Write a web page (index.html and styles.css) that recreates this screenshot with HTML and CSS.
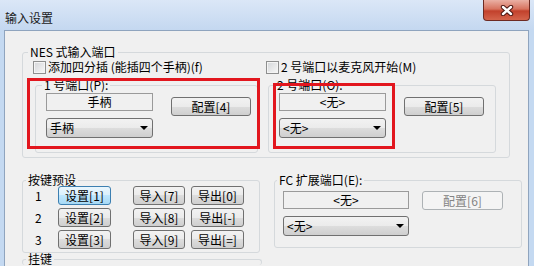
FILE: index.html
```html
<!DOCTYPE html>
<html>
	<head>
		<meta charset="utf-8">
		<title>输入设置</title>
		<link rel="stylesheet" href="styles.css">
	</head>
	<body>
		<div class="window">
			<div class="titlebar">
				<span class="title">输入设置</span>
				<div class="close">
					<svg width="14" height="11" viewBox="0 0 14 11">
						<path d="M3 2 L11 9 M11 2 L3 9" stroke="#4a1510" stroke-width="4.4" stroke-linecap="round"/>
						<path d="M3 2 L11 9 M11 2 L3 9" stroke="#fff" stroke-width="2.4" stroke-linecap="round"/>
					</svg>
				</div>
			</div>
			<div class="content">
				<fieldset class="group nes">
					<legend>NES 式输入端口</legend>
					<div class="nes-grid">
						<label class="check"><span class="box"></span>添加四分插 (能插四个手柄)(f)</label>
						<label class="check"><span class="box"></span>2 号端口以麦克风开始(M)</label>
						<fieldset class="group port port-1">
							<legend>1 号端口(P):</legend>
							<div class="port-body">
								<div class="fields">
									<div class="static">手柄</div>
									<div class="combo">手柄<span class="arrow"></span></div>
								</div>
								<button class="btn btn-conf">配置[4]</button>
							</div>
						</fieldset>
						<fieldset class="group port port-2">
							<legend>2 号端口(O):</legend>
							<div class="port-body">
								<div class="fields">
									<div class="static">&lt;无&gt;</div>
									<div class="combo">&lt;无&gt;<span class="arrow"></span></div>
								</div>
								<button class="btn btn-conf">配置[5]</button>
							</div>
						</fieldset>
					</div>
				</fieldset>
				<div class="lower">
					<div class="left-col">
						<fieldset class="group keys">
							<legend>按键预设</legend>
							<div class="keys-grid">
								<span class="num">1</span>
								<button class="btn btn-focus">设置[1]</button>
								<button class="btn btn-io">导入[7]</button>
								<button class="btn">导出[0]</button>
								<span class="num">2</span>
								<button class="btn">设置[2]</button>
								<button class="btn btn-io">导入[8]</button>
								<button class="btn">导出[-]</button>
								<span class="num">3</span>
								<button class="btn">设置[3]</button>
								<button class="btn btn-io">导入[9]</button>
								<button class="btn">导出[=]</button>
							</div>
						</fieldset>
						<fieldset class="group hang">
							<legend>挂键</legend>
						</fieldset>
					</div>
					<fieldset class="group fc">
						<legend>FC 扩展端口(E):</legend>
						<div class="fc-body">
							<div class="static">&lt;无&gt;</div>
							<button class="btn btn-disabled" disabled>配置[6]</button>
							<div class="combo">&lt;无&gt;<span class="arrow"></span></div>
						</div>
					</fieldset>
				</div>
				<div class="mark mark-1"></div>
				<div class="mark mark-2"></div>
			</div>
		</div>
	</body>
</html>
```

FILE: styles.css
```css
*{
	margin: 0;
	padding: 0;
	box-sizing: border-box;
}
body{
	width: 534px;
	height: 266px;
	overflow: hidden;
	background-color: #c4d9f1;
	font-family: "Noto Sans CJK SC", sans-serif;
	font-size: 12px;
	line-height: 14px;
	color: #000;
}
.window{
	height: 266px;
	overflow: hidden;
	display: flex;
	flex-direction: column;
}
.titlebar{
	height: 30px;
	flex: none;
	display: flex;
	justify-content: space-between;
	align-items: flex-start;
	background: linear-gradient(#dbe7f7, #c4d8f0);
}
.title{
	margin: 11px 0 0 5px;
	color: #1a1a1a;
}
.close{
	width: 47px;
	height: 21px;
	margin-right: 4px;
	border: 1px solid #6d2a22;
	border-top: none;
	border-radius: 0 0 4px 4px;
	background: linear-gradient(#eab0a4, #d7735f 45%, #c2412c 55%, #d4644c);
	display: flex;
	align-items: center;
	justify-content: center;
}
.content{
	flex: 1;
	min-height: 0;
	overflow: hidden;
	position: relative;
	margin: 0 5px 0 4px;
	border: 1px solid #8fa4be;
	border-bottom: none;
	background-color: #f0f0f0;
	padding: 14px 0 0 17px;
}
.group{
	border: 1px solid #d5d9dc;
	border-radius: 3px;
	min-width: 0;
}
.group legend{
	padding: 0 2px;
}
.nes{
	width: 488px;
}
.nes legend{
	margin-left: 5px;
	line-height: 14px;
}
.nes-grid{
	display: grid;
	grid-template-columns: 233px 1fr;
	row-gap: 5px;
	padding: 1px 0 4px 10px;
}
.check{
	display: flex;
	align-items: center;
	gap: 2px;
	height: 14px;
}
.box{
	width: 13px;
	height: 13px;
	border: 1px solid #8e8f8f;
	background: linear-gradient(135deg, #d4d6d9, #f7f7f7);
	box-shadow: inset 0 0 0 1px #f4f4f4;
}
.port{
	margin-left: 2px;
}
.port-1{
	width: 223px;
}
.port-2{
	width: 228px;
}
.port legend{
	margin-left: 6px;
	line-height: 12px;
}
.port-body{
	display: flex;
	align-items: flex-start;
	gap: 18px;
	padding: 2px 0 14px 10px;
}
.fields{
	width: 107px;
	display: flex;
	flex-direction: column;
	gap: 7px;
}
.static{
	height: 18px;
	border: 1px solid #9a9a9a;
	text-align: center;
	line-height: 16px;
}
.combo{
	height: 20px;
	border: 1px solid #707070;
	border-radius: 3px;
	background: linear-gradient(#f2f2f2, #ebebeb 50%, #dddddd 50%, #cfcfcf);
	display: flex;
	justify-content: space-between;
	align-items: center;
	padding: 0 4px 0 3px;
}
.arrow{
	border-left: 4px solid transparent;
	border-right: 4px solid transparent;
	border-top: 4px solid #000;
}
.btn{
	height: 19px;
	border: 1px solid #707070;
	border-radius: 3px;
	background: linear-gradient(#f2f2f2, #ebebeb 50%, #dddddd 50%, #cfcfcf);
	font: inherit;
	line-height: 17px;
	color: #000;
	width: 53px;
}
.btn-conf{
	width: 80px;
	margin-top: 4px;
}
.btn-io{
	width: 52px;
}
.btn-focus{
	border-color: #3c7fb1;
	background: linear-gradient(#eaf6fd, #d9f0fc 50%, #bee6fd 50%, #a7d9f5);
}
.btn-disabled{
	width: 81px;
	border-color: #adb2b5;
	background: #f4f4f4;
	color: #838383;
}
.lower{
	display: flex;
	align-items: flex-start;
	gap: 12px;
	margin-top: 15px;
}
.keys{
	width: 238px;
	margin-top: 1px;
}
.keys legend{
	margin-left: 3px;
	line-height: 12px;
}
.keys-grid{
	display: grid;
	grid-template-columns: 23px 75px 58px 53px;
	grid-auto-rows: 19px;
	row-gap: 3px;
	padding: 0 0 3px 12px;
}
.num{
	line-height: 19px;
}
.hang{
	width: 240px;
	height: 12px;
	border-bottom: none;
}
.hang legend{
	margin-left: 3px;
	line-height: 12px;
}
.fc{
	width: 248px;
}
.fc legend{
	margin-left: 2px;
}
.fc-body{
	display: grid;
	grid-template-columns: 126px 81px;
	column-gap: 13px;
	row-gap: 6px;
	padding: 4px 0 11px 8px;
}
.fc-body .combo{
	grid-column: 1;
}
.mark{
	position: absolute;
	border: 3px solid #e2161e;
}
.mark-1{
	left: 22px;
	top: 47px;
	width: 233px;
	height: 71px;
}
.mark-2{
	left: 268px;
	top: 52px;
	width: 122px;
	height: 66px;
}
```
